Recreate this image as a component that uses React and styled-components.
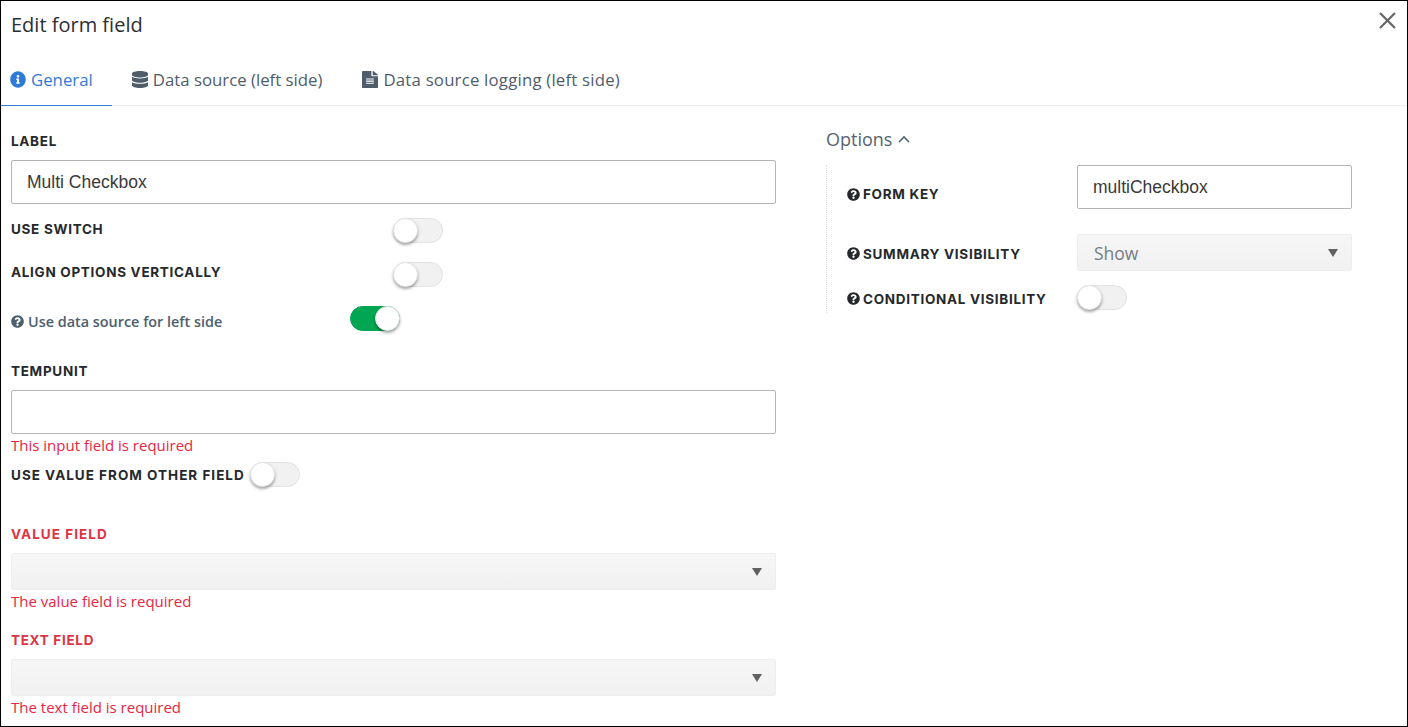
import React from "react";
import styled, { createGlobalStyle } from "styled-components";
import { FaInfoCircle, FaDatabase, FaFileAlt, FaQuestionCircle } from "react-icons/fa";

const Global = createGlobalStyle`
  html, body { margin: 0; padding: 0; background: #fff; }
  * { box-sizing: border-box; }
`;

const Page = styled.div`
  width: 1408px;
  height: 727px;
  border: 1px solid #000;
  background: #fff;
  overflow: hidden;
  position: relative;
  font-family: "Open Sans", "Noto Sans", sans-serif;
`;

const Header = styled.header`
  height: 52px;
  padding: 12px 0 0 10px;
`;

const Title = styled.h1`
  margin: 0;
  font-size: 20px;
  line-height: 24px;
  font-weight: 500;
  color: #2b2f33;
`;

const Close = styled.svg`
  position: absolute;
  top: 10px;
  right: 10px;
  width: 19px;
  height: 19px;
  stroke: #666;
  stroke-width: 2.2;
  fill: none;
`;

const Tabs = styled.nav`
  display: flex;
  height: 53px;
  border-bottom: 1px solid #e9ecef;
`;

const Tab = styled.div`
  display: flex;
  align-items: center;
  gap: 5px;
  height: 53px;
  padding: 0 ${(p) => p.$pr}px 0 ${(p) => p.$pl}px;
  font-size: 16.8px;
  font-weight: 400;
  letter-spacing: ${(p) => p.$ls || 0}px;
  color: ${(p) => (p.$active ? "#2f7ad6" : "#4f5d6b")};
  border-bottom: 1px solid ${(p) => (p.$active ? "#2f7ad6" : "transparent")};
  svg { width: 16px; height: 17px; flex: none; }
`;

const Columns = styled.main`
  display: flex;
`;

const LeftColumn = styled.section`
  width: 765px;
  margin-left: 10px;
  padding-top: 26px;
`;

const RightColumn = styled.section`
  width: 526px;
  margin-left: 50px;
  padding-top: 21px;
`;

const FieldLabel = styled.div`
  font-family: "Inter", "Liberation Sans", sans-serif;
  font-size: 13.5px;
  font-weight: 700;
  line-height: 18px;
  letter-spacing: ${(p) => p.$ls || 0.7}px;
  text-transform: uppercase;
  white-space: nowrap;
  color: ${(p) => (p.$error ? "#dc3545" : "#26292c")};
  margin-top: ${(p) => p.$mt || 0}px;
  margin-bottom: ${(p) => p.$mb || 0}px;
`;

const TextBox = styled.div`
  height: 44px;
  display: flex;
  align-items: center;
  padding-left: 15px;
  border: 1px solid #b5b5b5;
  border-radius: 2px;
  font-family: "Liberation Sans", Arial, sans-serif;
  font-size: 17.5px;
  color: #3a3a3a;
  width: 100%;
`;

const SelectBox = styled.div`
  height: 37px;
  display: flex;
  align-items: center;
  justify-content: space-between;
  padding: 0 13px 0 16px;
  background: linear-gradient(#f6f6f6, #f1f1f1);
  border: 1px solid #eeeeee;
  border-radius: 2px;
  font-size: 17.5px;
  color: #747c83;
  width: 100%;
`;

const Caret = styled.span`
  width: 0;
  height: 0;
  margin-left: auto;
  border-left: 5px solid transparent;
  border-right: 5px solid transparent;
  border-top: 8px solid #616161;
`;

const ErrorText = styled.div`
  font-size: 15px;
  line-height: 20px;
  color: #e8263f;
  margin-top: ${(p) => p.$mt || 0}px;
`;

const ToggleRow = styled.div`
  display: flex;
  align-items: center;
  height: 25px;
  margin-top: ${(p) => p.$mt || 0}px;
`;

const RowLabel = styled.div`
  width: ${(p) => p.$w}px;
  margin-top: ${(p) => p.$offset || 0}px;
  flex: none;
`;

const ToggleTrack = styled.span`
  display: block;
  position: relative;
  flex: none;
  width: 50px;
  height: 25px;
  border-radius: 13px;
  background: ${(p) => (p.$on ? "#00a651" : "#f1f1f1")};
  border: 1px solid ${(p) => (p.$on ? "#00a651" : "#e2e2e2")};
`;

const ToggleKnob = styled.span`
  position: absolute;
  top: -1px;
  left: ${(p) => (p.$on ? "24px" : "-1px")};
  width: 25px;
  height: 25px;
  border-radius: 50%;
  background: #fff;
  border: 1px solid #e4e4e4;
  box-shadow: 0 2px 3px rgba(0, 0, 0, 0.35);
`;

const HelpLabel = styled.div`
  display: flex;
  align-items: center;
  gap: 4px;
  font-size: 14.4px;
  font-weight: 600;
  color: #4d5e6c;
  white-space: nowrap;
  svg { font-size: 13px; }
`;

const OptionsToggle = styled.div`
  display: flex;
  align-items: center;
  gap: 6px;
  font-size: 18px;
  line-height: 24px;
  color: #55636f;
  svg { width: 12px; height: 8px; stroke: #55636f; stroke-width: 1.6; fill: none; }
`;

const OptionsPanel = styled.div`
  margin-top: 14px;
  padding-left: 20px;
  border-left: 1px dotted #dcdcdc;
  height: 148px;
`;

const OptionRow = styled.div`
  display: grid;
  grid-template-columns: 230px 275px;
  align-items: center;
  margin-top: ${(p) => p.$mt || 0}px;
`;

const OptionLabel = styled(FieldLabel)`
  display: flex;
  align-items: center;
  gap: 3px;
  padding-top: ${(p) => p.$pt || 0}px;
  svg { font-size: 13px; flex: none; color: #26292c; }
`;

function Toggle({ on }) {
  return (
    <ToggleTrack $on={on}>
      <ToggleKnob $on={on} />
    </ToggleTrack>
  );
}

export default function App() {
  return (
    <>
      <Global />
      <Page>
        <Header>
          <Title>Edit form field</Title>
        </Header>
        <Close viewBox="0 0 19 19">
          <path d="M2 2 L17 17 M17 2 L2 17" />
        </Close>
        <Tabs>
          <Tab $active $pl={9} $pr={19}><FaInfoCircle preserveAspectRatio="none" />General</Tab>
          <Tab $pl={20} $pr={20}><FaDatabase preserveAspectRatio="none" />Data source (left side)</Tab>
          <Tab $pl={20} $pr={20} $ls={0.2}><FaFileAlt preserveAspectRatio="none" />Data source logging (left side)</Tab>
        </Tabs>
        <Columns>
          <LeftColumn>
            <FieldLabel $mb={10}>Label</FieldLabel>
            <TextBox>Multi Checkbox</TextBox>
            <ToggleRow $mt={14}>
              <RowLabel $w={382} $offset={-4}><FieldLabel>Use switch</FieldLabel></RowLabel>
              <Toggle />
            </ToggleRow>
            <ToggleRow $mt={19}>
              <RowLabel $w={382} $offset={-6}><FieldLabel>Align options vertically</FieldLabel></RowLabel>
              <Toggle />
            </ToggleRow>
            <ToggleRow $mt={19}>
              <RowLabel $w={339} $offset={6}>
                <HelpLabel><FaQuestionCircle />Use data source for left side</HelpLabel>
              </RowLabel>
              <Toggle on />
            </ToggleRow>
            <FieldLabel $mt={31} $mb={10}>TempUnit</FieldLabel>
            <TextBox />
            <ErrorText $mt={1}>This input field is required</ErrorText>
            <ToggleRow $mt={7}>
              <RowLabel $w={239}><FieldLabel $ls={1}>Use value from other field</FieldLabel></RowLabel>
              <Toggle />
            </ToggleRow>
            <FieldLabel $error $ls={1.05} $mt={38} $mb={10}>Value field</FieldLabel>
            <SelectBox><Caret /></SelectBox>
            <ErrorText $mt={1}>The value field is required</ErrorText>
            <FieldLabel $error $mt={20} $mb={10}>Text field</FieldLabel>
            <SelectBox><Caret /></SelectBox>
            <ErrorText $mt={1}>The text field is required</ErrorText>
          </LeftColumn>
          <RightColumn>
            <OptionsToggle>
              Options
              <svg viewBox="0 0 12 8"><path d="M1 7 L6 2 L11 7" /></svg>
            </OptionsToggle>
            <OptionsPanel>
              <OptionRow>
                <OptionLabel $pt={14}><FaQuestionCircle />Form key</OptionLabel>
                <TextBox>multiCheckbox</TextBox>
              </OptionRow>
              <OptionRow $mt={25}>
                <OptionLabel $pt={2}><FaQuestionCircle />Summary visibility</OptionLabel>
                <SelectBox>Show<Caret /></SelectBox>
              </OptionRow>
              <OptionRow $mt={14}>
                <OptionLabel $pt={2}><FaQuestionCircle />Conditional visibility</OptionLabel>
                <Toggle />
              </OptionRow>
            </OptionsPanel>
          </RightColumn>
        </Columns>
      </Page>
    </>
  );
}
